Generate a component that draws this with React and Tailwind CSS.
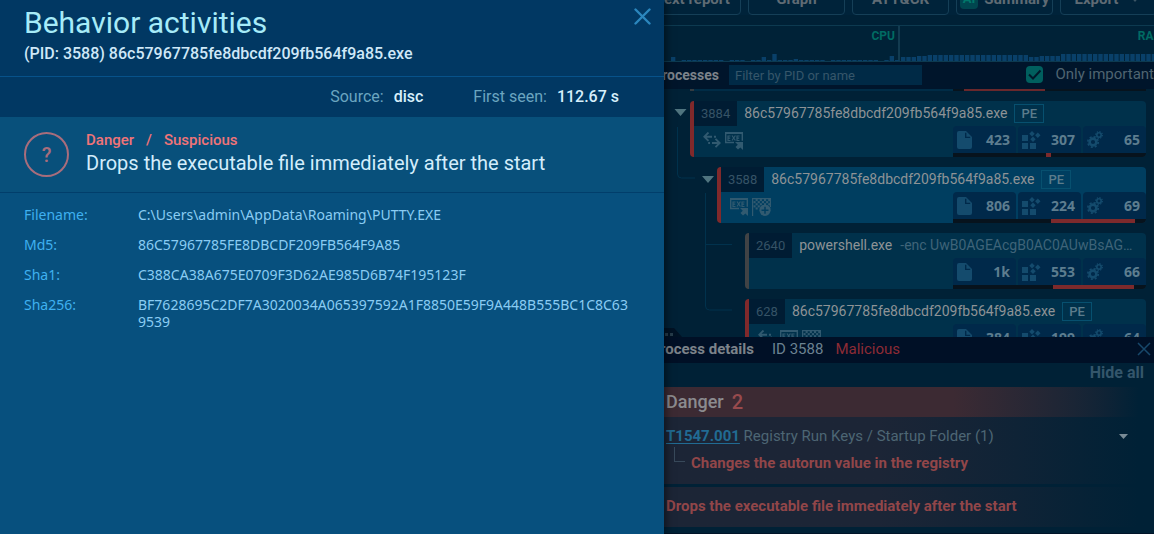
import React from "react";

const CPU = [4, 0, 1, 1, 1, 1, 1, 1, 1, 1, 0, 1, 1, 1, 0, 1, 1, 4, 1, 7, 1, 1, 1, 2, 1, 1, 1, 1, 1, 0, 1, 1, 1, 1, 1, 1, 1, 1, 1, 0, 1, 5, 1];
const RAM = [4, 4, 4, 5, 5, 6, 6, 6, 6, 6, 6, 6, 6, 6, 6, 6, 6, 6, 6, 6, 6, 6, 6, 6, 4, 4, 5, 5, 5, 5, 7, 7, 7, 7, 7, 7, 7, 7, 7, 7, 7, 7, 7, 7, 7, 7, 7, 7, 7, 7, 7, 7];

const DETAILS = [
  ["Filename:", "C:\\Users\\admin\\AppData\\Roaming\\PUTTY.EXE"],
  ["Md5:", "86C57967785FE8DBCDF209FB564F9A85"],
  ["Sha1:", "C388CA38A675E0709F3D62AE985D6B74F195123F"],
  ["Sha256:", "BF7628695C2DF7A3020034A065397592A1F8850E59F9A448B555BC1C8C639539"],
];

function Bars({ data, className }) {
  return (
    <svg className={className} width="280" height="12" viewBox="0 0 840 36" aria-hidden="true">
      {data.map((h, i) => (
        <rect key={i} x={i * 16} y={36 - h * 3} width="13" height={h * 3} fill="#094069" />
      ))}
    </svg>
  );
}

function ArrowsIcon() {
  return (
    <svg width="18" height="16" viewBox="0 0 18 16" fill="none" stroke="currentColor" strokeWidth="1.9" aria-hidden="true">
      <path d="M5.500 0.500 1.300 4.700l4.200 4.200M1.500 4.700H9M11 4.700h2" />
      <path d="M12.500 6.800l4.200 4.200-4.200 4.200M16.500 11H9M7 11H5.200" />
    </svg>
  );
}

function ExeIcon() {
  return (
    <svg width="18" height="18" viewBox="0 0 18 18" fill="none" stroke="currentColor" aria-hidden="true">
      <path d="M9 10.500H.7V.7h16.600v8" strokeWidth="1.400" />
      <path d="M.5 1.200h17" strokeWidth="1.800" />
      <path d="M5.500 4H3v4.500h2.500M3 6.200h2.200M7 3.500l3.400 5M10.400 3.500 7 8.500M14.500 4H12v4.500h2.500M12 6.200h2.200" strokeWidth="1.200" />
      <path d="M18 10v8l-2.600-2.600L13 17.600l-2.500-2.500 2.300-2.300L10 10z" fill="currentColor" stroke="none" />
    </svg>
  );
}

function FlagIcon() {
  const cells = [];
  for (let r = 0; r < 5; r++) for (let c = 0; c < 8; c++) if ((r + c) % 2) cells.push([c, r]);
  return (
    <svg width="19" height="18" viewBox="0 0 19 18" aria-hidden="true">
      <path d="M.6 0v18" stroke="currentColor" strokeWidth="1.200" />
      <path d="M0 .6h18.400V9" stroke="currentColor" strokeWidth="1.200" fill="none" />
      {cells.map(([c, r]) => (
        <rect key={c + "-" + r} x={1.5 + c * 2.1} y={1 + r * 2.1} width="2.1" height="2.1" fill="currentColor" />
      ))}
      <circle cx="13" cy="12.300" r="5.600" fill="currentColor" />
      <path d="M13 8.800v7M9.500 12.300h7" stroke="#003e60" strokeWidth="1.500" />
    </svg>
  );
}

function FileIcon() {
  return (
    <svg width="15" height="18" viewBox="0 0 15 18" aria-hidden="true">
      <path d="M2 0h7l6 6v10a2 2 0 0 1-2 2H2a2 2 0 0 1-2-2V2a2 2 0 0 1 2-2z" fill="currentColor" />
      <path d="M8.700 1.800v4.600h4.500" fill="none" stroke="#00294a" strokeWidth="1.400" />
    </svg>
  );
}

function ModulesIcon() {
  return (
    <svg width="19" height="18" viewBox="0 0 19 18" fill="currentColor" aria-hidden="true">
      <path d="M0 4h6v6H0zM0 12h6v6H0zM8 12h6v6H8z" />
      <path d="M10 0l2.700 2.700L10 5.400 7.300 2.700zM15.800 1.600l2.700 2.700L15.800 7l-2.700-2.700zM11 5.600l2.700 2.700L11 11 8.300 8.300z" />
    </svg>
  );
}

function GearsIcon() {
  return (
    <svg width="16" height="18" viewBox="0 0 16 18" fill="none" stroke="currentColor" aria-hidden="true">
      <circle cx="6" cy="11" r="3.400" strokeWidth="2.600" />
      <circle cx="6" cy="11" r="5.200" strokeWidth="1.700" strokeDasharray="2.04 2.04" />
      <circle cx="12" cy="4" r="2.200" strokeWidth="1.600" />
      <circle cx="12" cy="4" r="3.400" strokeWidth="1.100" strokeDasharray="1.33 1.33" />
    </svg>
  );
}

function Stat({ icon, value }) {
  return (
    <div className="flex flex-1 items-center justify-between rounded-t-sm bg-[#00294a] pl-1 pr-1.5 text-[#144b6d]">
      {icon}
      <span className="font-['Noto_Sans',sans-serif] text-sm font-bold text-[#5d7d8f]">{value}</span>
    </div>
  );
}

function ProcessCard({ pid, name, args, tag, icons, stats, bar, indent, accent, bg }) {
  return (
    <article className={`flex h-14 shrink-0 overflow-hidden rounded-sm border-l-4 ${indent} ${accent} ${bg}`}>
      <div className="flex min-w-0 flex-1 flex-col">
        <div className="flex h-[25px] items-center">
          <span className="flex h-full items-center bg-[#001c33] px-[7px] text-[13px] text-[#365366]">{pid}</span>
          <span className="ml-[7px] pb-0.5 text-sm text-[#8e9396]">{name}</span>
          {args && <span className="ml-2 mr-1.5 min-w-0 flex-1 truncate pb-0.5 text-sm text-[#3f6479]">{args}</span>}
          {tag && (
            <span className="ml-[7px] flex h-[19px] items-center border border-[#07506f] px-1.5 text-[13px] font-medium text-[#5c7c8b]">{tag}</span>
          )}
        </div>
        <div className="flex flex-1 items-stretch justify-between">
          <div className="flex items-start gap-1 pl-[9px] pt-1.5 text-[#315a70]">{icons}</div>
          <div className="flex w-[193px] flex-col">
            <div className="flex flex-1 gap-0.5">
              <Stat icon={<FileIcon />} value={stats[0]} />
              <Stat icon={<ModulesIcon />} value={stats[1]} />
              <Stat icon={<GearsIcon />} value={stats[2]} />
            </div>
            <div className="flex h-1 bg-[#07131d]">
              <div className="bg-[#7d2a2c]" style={{ marginLeft: bar[0], width: bar[1] }} />
            </div>
          </div>
        </div>
      </div>
    </article>
  );
}

function ToolButton({ children, className = "" }) {
  return (
    <button type="button" className={`flex h-8 w-[97px] shrink-0 items-center justify-center gap-1.5 rounded-sm border border-[#153f57] text-[15px] font-bold text-[#5f6b74] ${className}`}>
      {children}
    </button>
  );
}

function TreeLines() {
  return (
    <svg className="absolute left-0 top-0" width="90" height="247" viewBox="0 0 90 247" fill="none" stroke="#01324d" aria-hidden="true">
      <path d="M25.500 38v47a4 4 0 0 0 4 4H43M53.500 104v113a4 4 0 0 0 4 4H80M53.500 155.500H80" />
      <path d="M22.500 20h12l-6 7zM50 87h12l-6 7z" fill="#4f747f" stroke="none" />
    </svg>
  );
}

export default function App() {
  return (
    <div className="relative h-screen min-h-[534px] overflow-hidden bg-[#002136] font-[Roboto,sans-serif]">
      <main className="flex h-full flex-col overflow-hidden pl-[652px]">
        <nav className="flex h-[15px] shrink-0 items-end gap-[7px] overflow-hidden bg-[#00233a]">
          <ToolButton className="-ml-2">Text report</ToolButton>
          <ToolButton>Graph</ToolButton>
          <ToolButton>ATT&amp;CK</ToolButton>
          <ToolButton>
            <span className="rounded-sm bg-[#00464f] px-[3px] text-[13px] leading-5 text-[#00776a]">AI</span>
            Summary
          </ToolButton>
          <ToolButton>
            Export
            <svg width="18" height="6" viewBox="0 0 18 6" aria-hidden="true"><path d="M6 0h10L11 6z" fill="#3d5767" /></svg>
          </ToolButton>
        </nav>

        <section className="mt-2.5 flex h-[37px] shrink-0 overflow-hidden border-y border-[#0d3a50] bg-[#002237] text-xs font-bold text-[#006b63]">
          <div className="flex w-[248px] shrink-0 flex-col justify-between border-r-2 border-[#123b50]">
            <span className="mr-[3px] mt-0.5 text-right">CPU</span>
            <Bars data={CPU} className="ml-[19px] shrink-0" />
          </div>
          <div className="flex min-w-0 flex-1 flex-col justify-between overflow-hidden">
            <span className="-mr-2.5 mt-0.5 text-right">RAM</span>
            <Bars data={RAM} className="ml-px shrink-0" />
          </div>
        </section>

        <section className="flex h-[27px] shrink-0 items-center bg-[#00152b] pb-px text-sm">
          <h2 className="w-[67px] font-bold text-[#7c838a]">
            <span className="flex justify-end">Processes</span>
          </h2>
          <input
            aria-label="Filter by PID or name"
            placeholder="Filter by PID or name"
            className="ml-2.5 h-5 w-[193px] bg-[#002a46] px-1.5 text-[13px] text-[#7c838a] outline-none placeholder:text-[#36566a]"
          />
          <label className="ml-auto flex items-center gap-3 whitespace-nowrap text-[15px] text-[#4f6471]">
            <span className="relative flex size-[17px]">
              <input type="checkbox" defaultChecked className="size-[17px] appearance-none rounded-sm bg-[#005f5e]" />
              <svg className="pointer-events-none absolute inset-0" width="17" height="17" viewBox="0 0 17 17" fill="none" stroke="#00192b" strokeWidth="2" aria-hidden="true">
                <path d="M3 8.500l4 4 7.500-8" />
              </svg>
            </span>
            Only important
          </label>
        </section>

        <section className="relative flex min-h-0 flex-1 flex-col gap-2.5 overflow-hidden pr-2">
          <TreeLines />
          <div className="ml-[38px] flex h-0.5 shrink-0 justify-between bg-[#002c46]">
            <span className="w-1 bg-[#343b40]" />
            <span className="flex w-[193px] bg-[#07131d] pl-[11px]">
              <span className="w-[81px] bg-[#6a282c]" />
            </span>
          </div>
          <ProcessCard pid="3884" name="86c57967785fe8dbcdf209fb564f9a85.exe" tag="PE" indent="ml-[38px]" accent="border-[#80292b]" bg="bg-[#00314b]"
            icons={<><ArrowsIcon /><ExeIcon /></>} stats={["423", "307", "65"]} bar={[93, 5]} />
          <ProcessCard pid="3588" name="86c57967785fe8dbcdf209fb564f9a85.exe" tag="PE" indent="ml-[65px]" accent="border-[#80292b]" bg="bg-[#003e60]"
            icons={<><ExeIcon /><FlagIcon /></>} stats={["806", "224", "69"]} bar={[98, 84]} />
          <ProcessCard pid="2640" name="powershell.exe" args="-enc UwB0AGEAcgB0AC0AUwBsAGUAZQBwACAALQBzACAAMQA" indent="ml-[93px]" accent="border-[#414345]" bg="bg-[#00314b]"
            stats={["1k", "553", "66"]} bar={[100, 81]} />
          <ProcessCard pid="628" name="86c57967785fe8dbcdf209fb564f9a85.exe" tag="PE" indent="ml-[93px]" accent="border-[#80292b]" bg="bg-[#00314b]"
            icons={<><ArrowsIcon /><ExeIcon /><FlagIcon /></>} stats={["384", "199", "64"]} bar={[60, 60]} />
          <svg className="absolute bottom-0 left-0" width="30" height="9" viewBox="0 0 30 9" aria-hidden="true">
            <path d="M0 0h22l8 9H0z" fill="#001224" />
            <path d="M13 5h3v3h-3zM18 5h3v3h-3z" fill="#263c4b" />
          </svg>
        </section>

        <section className="shrink-0">
          <header className="flex h-[26px] items-center bg-[#001026] pb-0.5 text-[15px] text-[#6b8291]">
            <h2 className="flex w-[102px] justify-end whitespace-nowrap font-bold text-[#7c838a]">Process details</h2>
            <span className="ml-[18px]">ID 3588</span>
            <span className="ml-3 text-[#8d2b35]">Malicious</span>
            <button type="button" aria-label="Close details" className="ml-auto mr-[3px]">
              <svg width="14" height="14" viewBox="0 0 14 14" stroke="#17486b" strokeWidth="1.500" aria-hidden="true"><path d="M1 1l12 12M13 1 1 13" /></svg>
            </button>
          </header>
          <div className="flex h-6 items-start justify-end pr-2.5">
            <button type="button" className="text-base leading-5 font-bold text-[#34566b]">Hide all</button>
          </div>
          <h3 className="flex h-[30px] items-center gap-2 bg-linear-to-r from-[#3c2a33] from-60% to-[#002136] to-97% pl-3.5 text-lg font-medium text-[#8b8b8f]">
            Danger <span className="text-xl text-[#984a4d]">2</span>
          </h3>
          <div className="h-[67px] bg-linear-to-r from-[#1c2536] from-45% to-[#002136] to-97% pl-3.5 pt-2 text-[15px] text-[#4d6674]">
            <div className="flex h-[22px] items-center justify-between pr-[26px]">
              <p><a href="#technique" className="font-bold text-[#216b93] underline underline-offset-2">T1547.001</a> Registry Run Keys / Startup Folder (1)</p>
              <svg width="9" height="5" viewBox="0 0 9 5" aria-hidden="true"><path d="M0 0h9L4.500 5z" fill="#798b96" /></svg>
            </div>
            <div className="ml-2 flex">
              <span className="h-[15px] w-[11px] border-b border-l border-[#38495a]" />
              <p className="ml-1.5 mt-1.5 font-bold leading-5 text-[#914649]">Changes the autorun value in the registry</p>
            </div>
          </div>
          <p className="mt-[3px] flex h-10 items-center bg-linear-to-r from-[#1c2536] from-45% to-[#002136] to-97% pb-0.5 pl-3.5 text-[15px] font-bold text-[#914649]">
            Drops the executable file immediately after the start
          </p>
          <div className="mt-1.5 h-px bg-[#001428]" />
        </section>
      </main>

      <aside role="dialog" aria-labelledby="panel-title" className="absolute inset-y-0 left-0 w-[664px] bg-[#07507e] shadow-[2px_0_8px_rgba(0,0,0,0.5)]">
        <header className="flex h-[77px] items-start justify-between border-b border-[#07528a] bg-[#013863] pl-6 pr-[13px] pt-1">
          <div>
            <h1 id="panel-title" className="text-[30px] leading-[38px] text-[#a6ebf8]">Behavior activities</h1>
            <p className="text-base font-medium leading-6 text-[#cfe8f8]">(PID: 3588) 86c57967785fe8dbcdf209fb564f9a85.exe</p>
          </div>
          <button type="button" aria-label="Close" className="mt-1">
            <svg width="17" height="17" viewBox="0 0 17 17" stroke="#2b86bd" strokeWidth="2.400" strokeLinecap="round" aria-hidden="true"><path d="M1.500 1.500l14 14M15.500 1.500l-14 14" /></svg>
          </button>
        </header>
        <div className="flex h-10 items-center justify-end gap-[50px] bg-[#013863] pr-[45px] text-base text-[#6ba5c0]">
          <span>Source: <b className="ml-1.5 font-medium text-[#d7effb]">disc</b></span>
          <span>First seen: <b className="ml-1.5 font-medium text-[#d7effb]">112.67 s</b></span>
        </div>
        <section className="flex h-[76px] items-center gap-[17px] border-b border-[#013e6b] bg-[#08507b] pl-6">
          <span className="flex size-[45px] items-center justify-center rounded-full border-2 border-[#a86d7c] text-xl font-medium text-[#a86d7c]">?</span>
          <div className="pb-1">
            <p className="flex gap-3 text-[15px] font-medium leading-5 text-[#f07478]"><span>Danger</span><span>/</span><span>Suspicious</span></p>
            <h2 className="text-xl leading-[26px] text-[#d3edfb]">Drops the executable file immediately after the start</h2>
          </div>
        </section>
        <dl className="grid grid-cols-[114px_1fr] gap-y-[13px] pl-6 pr-[30px] pt-[13px] font-['Noto_Sans',sans-serif] text-sm leading-[17px]">
          {DETAILS.map(([label, value]) => (
            <React.Fragment key={label}>
              <dt className="text-[#3fb0f0]">{label}</dt>
              <dd className="break-all text-[#8accf3]">{value}</dd>
            </React.Fragment>
          ))}
        </dl>
      </aside>
    </div>
  );
}
